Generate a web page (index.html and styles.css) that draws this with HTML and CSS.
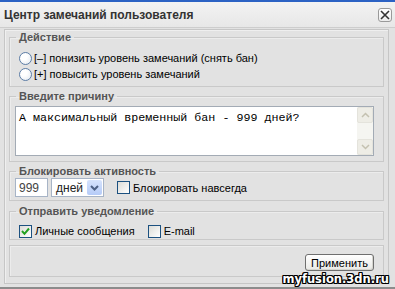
FILE: index.html
```html
<!DOCTYPE html>
<html lang="ru">
<head>
    <meta charset="UTF-8">
    <title>Центр замечаний пользователя</title>
    <link rel="stylesheet" href="styles.css">
</head>
<body>
    <div class="window">
        <div class="titlebar">
            <span class="title">Центр замечаний пользователя</span>
            <span class="close">
                <svg width="10" height="10" viewBox="0 0 10 10"><path d="M1 1 L9 9 M9 1 L1 9" stroke="#333" stroke-width="1.6" fill="none"/></svg>
            </span>
        </div>

        <div class="panel">
            <fieldset class="group group-action">
                <legend>Действие</legend>
                <label class="row"><span class="radio"></span>[–] понизить уровень замечаний (снять бан)</label>
                <label class="row"><span class="radio"></span>[+] повысить уровень замечаний</label>
            </fieldset>

            <fieldset class="group group-reason">
                <legend>Введите причину</legend>
                <div class="textarea">
                    <div class="textarea-text">А максимальный временный бан - 999 дней?</div>
                    <div class="scrollbar">
                        <span class="scroll-btn">
                            <svg width="9" height="6" viewBox="0 0 9 6"><path d="M1 5 L4.5 1.5 L8 5" stroke="#c4c1b0" stroke-width="1.5" fill="none"/></svg>
                        </span>
                        <span class="scroll-track"></span>
                        <span class="scroll-btn">
                            <svg width="9" height="6" viewBox="0 0 9 6"><path d="M1 1 L4.5 4.5 L8 1" stroke="#c4c1b0" stroke-width="1.5" fill="none"/></svg>
                        </span>
                    </div>
                </div>
            </fieldset>

            <fieldset class="group group-block">
                <legend>Блокировать активность</legend>
                <div class="inline">
                    <span class="field field-days">999</span>
                    <span class="field select">
                        <span class="select-value">дней</span>
                        <span class="select-arrow">
                            <svg width="9" height="6" viewBox="0 0 9 6"><path d="M1 1 L4.5 4.5 L8 1" stroke="#4d6185" stroke-width="2" fill="none"/></svg>
                        </span>
                    </span>
                    <label class="check-label check-forever"><span class="checkbox"></span>Блокировать навсегда</label>
                </div>
            </fieldset>

            <fieldset class="group group-notify">
                <legend>Отправить уведомление</legend>
                <div class="inline">
                    <label class="check-label"><span class="checkbox checked">
                        <svg width="9" height="9" viewBox="0 0 9 9"><path d="M1 4 L3.5 6.8 L8 1.5" stroke="#21a121" stroke-width="2" fill="none"/></svg>
                    </span>Личные сообщения</label>
                    <label class="check-label check-email"><span class="checkbox"></span>E-mail</label>
                </div>
            </fieldset>

            <div class="group group-submit">
                <button class="apply">Применить</button>
            </div>
        </div>

        <div class="watermark">myfusion.3dn.ru</div>
    </div>
</body>
</html>
```

FILE: styles.css
```css
body {
    margin: 0;
    font-family: "Liberation Sans", Arial, sans-serif;
    font-size: 11px;
    color: #000;
    background: #e4e4e4;
}

.window {
    position: relative;
    width: 395px;
    height: 289px;
    box-sizing: border-box;
    display: flex;
    flex-direction: column;
    background: #e2e2e2;
    border-top: 2px solid #2c62c4;
    border-bottom: 2px solid #8c8c8c;
    overflow: hidden;
}

.titlebar {
    height: 25px;
    flex: none;
    display: flex;
    align-items: center;
    justify-content: space-between;
    padding: 0 3px 0 4px;
    background: linear-gradient(#f3f3f3, #e7e7e7);
    border-bottom: 1px solid #cdcdcd;
}

.title {
    font-weight: bold;
    font-size: 12px;
    color: #333;
}

.close {
    width: 14px;
    height: 14px;
    box-sizing: border-box;
    display: flex;
    align-items: center;
    justify-content: center;
    border: 1px solid #9a9a9a;
    border-radius: 3px;
    background: linear-gradient(#ffffff, #ececec);
    margin-top: 1px;
}

.panel {
    flex: 1;
    display: flex;
    flex-direction: column;
    gap: 3px;
    margin: 1px 6px 3px 4px;
    padding: 1px 4px 0 4px;
    border: 1px solid #c6c6c6;
    box-shadow: inset 1px 1px 0 #efefef;
}

/* legend is offset by fieldset padding, so keep side padding at 0
   and indent the children instead */
.group {
    margin: 0;
    min-width: 0;
    padding-left: 0;
    padding-right: 0;
    border: 1px solid #c9c9c9;
    box-shadow: inset 1px 1px 0 #ececec;
}

.group legend {
    margin-left: 6px;
    padding: 0 3px;
    font-weight: bold;
    color: #555;
    line-height: 13px;
}

.group-action {
    padding-top: 6px;
    padding-bottom: 4px;
}

.row {
    height: 16px;
    margin-left: 9px;
    display: flex;
    align-items: center;
    gap: 2px;
}

.radio {
    width: 13px;
    height: 13px;
    box-sizing: border-box;
    border: 1px solid #5c7da6;
    border-radius: 50%;
    background: radial-gradient(circle at 35% 35%, #ffffff 30%, #dfe6ee 100%);
}

.group-reason {
    padding-top: 3px;
    padding-bottom: 5px;
}

.textarea {
    height: 50px;
    margin: 0 9px 0 5px;
    box-sizing: border-box;
    display: flex;
    border: 1px solid #a3abb5;
    background: #fff;
}

.textarea-text {
    flex: 1;
    padding: 4px 3px;
    font-family: "Liberation Mono", "Courier New", monospace;
    font-size: 11.7px;
    line-height: 15px;
}

.scrollbar {
    width: 16px;
    display: flex;
    flex-direction: column;
    background: #f5f5f1;
}

.scroll-btn {
    height: 16px;
    box-sizing: border-box;
    display: flex;
    align-items: center;
    justify-content: center;
    border: 1px solid #e4e3dc;
    border-radius: 2px;
    background: #eeede6;
}

.scroll-track {
    flex: 1;
}

.group-block {
    padding-top: 0;
    padding-bottom: 3px;
}

.inline {
    display: flex;
    align-items: center;
}

.group-block .inline {
    margin-left: 5px;
}

.field {
    height: 19px;
    box-sizing: border-box;
    border: 1px solid #a7b4c6;
    background: #fff;
    font-size: 12px;
    color: #444;
    display: flex;
    align-items: center;
}

.field-days {
    width: 33px;
    padding-left: 3px;
}

.select {
    width: 53px;
    margin-left: 3px;
    justify-content: space-between;
    padding: 1px;
    color: #222;
}

.select-value {
    padding-left: 3px;
}

.select-arrow {
    width: 15px;
    height: 15px;
    display: flex;
    align-items: center;
    justify-content: center;
    border-radius: 2px;
    background: linear-gradient(#d6e3fd, #b5cbf7);
}

.check-label {
    display: flex;
    align-items: center;
    gap: 3px;
    height: 14px;
}

.check-forever {
    margin-left: 13px;
}

.checkbox {
    width: 13px;
    height: 13px;
    box-sizing: border-box;
    display: flex;
    align-items: center;
    justify-content: center;
    border: 1px solid #1c5180;
    background: linear-gradient(135deg, #dcdcd7, #ffffff);
}

.group-notify {
    margin-top: 1px;
    padding-top: 6px;
    padding-bottom: 1px;
}

.group-notify .inline {
    margin-left: 9px;
}

.check-email {
    margin-left: 13px;
}

.group-submit {
    margin-top: 2px;
    display: flex;
    justify-content: flex-end;
    padding: 8px 9px 5px 0;
}

.apply {
    height: 17px;
    width: 69px;
    padding: 0;
    font-family: "Liberation Sans", Arial, sans-serif;
    font-size: 11px;
    color: #000;
    border: 1px solid #6f6f6f;
    border-radius: 3px;
    background: linear-gradient(#ffffff, #e9e9e6);
    box-shadow: inset -1px -1px 0 #d6d6d0;
}

.watermark {
    position: absolute;
    right: 6px;
    bottom: 1px;
    font-family: "DejaVu Sans", Verdana, sans-serif;
    font-weight: bold;
    font-size: 11.5px;
    color: #fff;
    text-shadow: 1px 0 0 #000, -1px 0 0 #000, 0 1px 0 #000, 0 -1px 0 #000,
        1px 1px 0 #000, -1px -1px 0 #000, 1px -1px 0 #000, -1px 1px 0 #000;
}
```
